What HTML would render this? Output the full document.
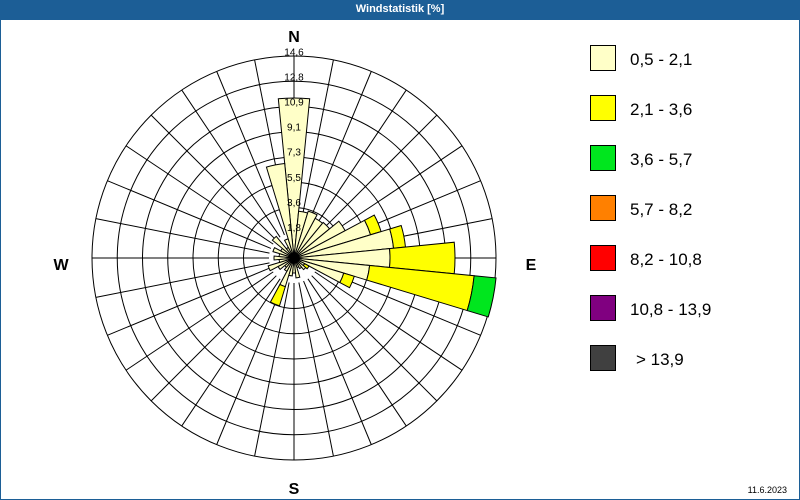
<!DOCTYPE html>
<html><head><meta charset="utf-8"><style>
body{margin:0;width:800px;height:500px;overflow:hidden;background:#fff;font-family:"Liberation Sans",sans-serif}
#t{position:absolute;left:0;top:0;width:800px;height:20px;background:#1c5e96;color:#fff;font-size:11px;font-weight:bold;text-align:center;line-height:19px}
#f{position:absolute;left:0;top:20px;width:798px;height:479px;border:1px solid #1c5e96;border-top:none}
</style></head><body>
<div id="t">Windstatistik [%]</div><div id="f"></div>
<svg id="s" width="800" height="500" style="position:absolute;left:0;top:0" font-family="Liberation Sans, sans-serif"></svg>
<script>
var cx=294,cy=258,R=202,h='';
function pt(a,r){a=a*Math.PI/180;return [cx+r*Math.sin(a),cy-r*Math.cos(a)];}
for(var k=2;k<=8;k++)h+='<circle cx="'+cx+'" cy="'+cy+'" r="'+(k*R/8)+'" fill="none" stroke="#000" stroke-width="1"/>';
for(var a=0;a<360;a+=11.25){var p=pt(a,25),q=pt(a,R);h+='<line x1="'+p[0]+'" y1="'+p[1]+'" x2="'+q[0]+'" y2="'+q[1]+'" stroke="#000"/>';}
var d={0:[160],1:[47],2:[49],3:[45],4:[46],5:[58],6:[80,91],7:[100,112],8:[96,161],9:[76,181,203],10:[52,63],11:[12,17],12:[15],13:[12],14:[10],15:[20],16:[15],17:[18],18:[30,50],19:[15],20:[12],21:[18],22:[27],23:[15],24:[20],25:[15],26:[22],27:[15],28:[28],29:[12],30:[20],31:[95]};
var cols=['#ffffc8','#ffff00','#00e61e'];
function seg(a,r0,r1){var a0=a-5.625,a1=a+5.625,p=pt(a0,r0),q=pt(a0,r1),s=pt(a1,r1),u=pt(a1,r0);
return 'M'+p+' L'+q+' A'+r1+' '+r1+' 0 0 1 '+s+' L'+u+(r0>0?' A'+r0+' '+r0+' 0 0 0 '+p:'')+' Z';}
for(var i in d){var r0=0;d[i].forEach(function(r,j){h+='<path d="'+seg(i*11.25,r0,r)+'" fill="'+cols[j]+'" stroke="#000" stroke-width="1"/>';r0=r;});}
var lab=['1,8','3,6','5,5','7,3','9,1','10,9','12,8','14,6'];
for(var k=0;k<8;k++)h+='<text x="'+cx+'" y="'+(231-k*25.1)+'" font-size="10" text-anchor="middle" fill="#000">'+lab[k]+'</text>';
h+='<text x="'+cx+'" y="42" font-size="16" font-weight="bold" text-anchor="middle">N</text>';
h+='<text x="'+cx+'" y="494" font-size="16" font-weight="bold" text-anchor="middle">S</text>';
h+='<text x="61" y="270" font-size="16" font-weight="bold" text-anchor="middle">W</text>';
h+='<text x="531" y="270" font-size="16" font-weight="bold" text-anchor="middle">E</text>';
var lg=[['#ffffc8','0,5 - 2,1'],['#ffff00','2,1 - 3,6'],['#00e61e','3,6 - 5,7'],['#ff8000','5,7 - 8,2'],['#ff0000','8,2 - 10,8'],['#800080','10,8 - 13,9'],['#404040','&gt; 13,9']];
lg.forEach(function(l,i){var y=45+i*50;h+='<rect x="590.5" y="'+(y+.5)+'" width="25" height="25" fill="'+l[0]+'" stroke="#000"/>';
h+='<text x="'+(i==6?636:630)+'" y="'+(y+20)+'" font-size="17" fill="#000">'+l[1]+'</text>';});
h+='<text x="787" y="493" font-size="9" text-anchor="end">11.6.2023</text>';
document.getElementById('s').innerHTML=h;
</script>
</body></html>
